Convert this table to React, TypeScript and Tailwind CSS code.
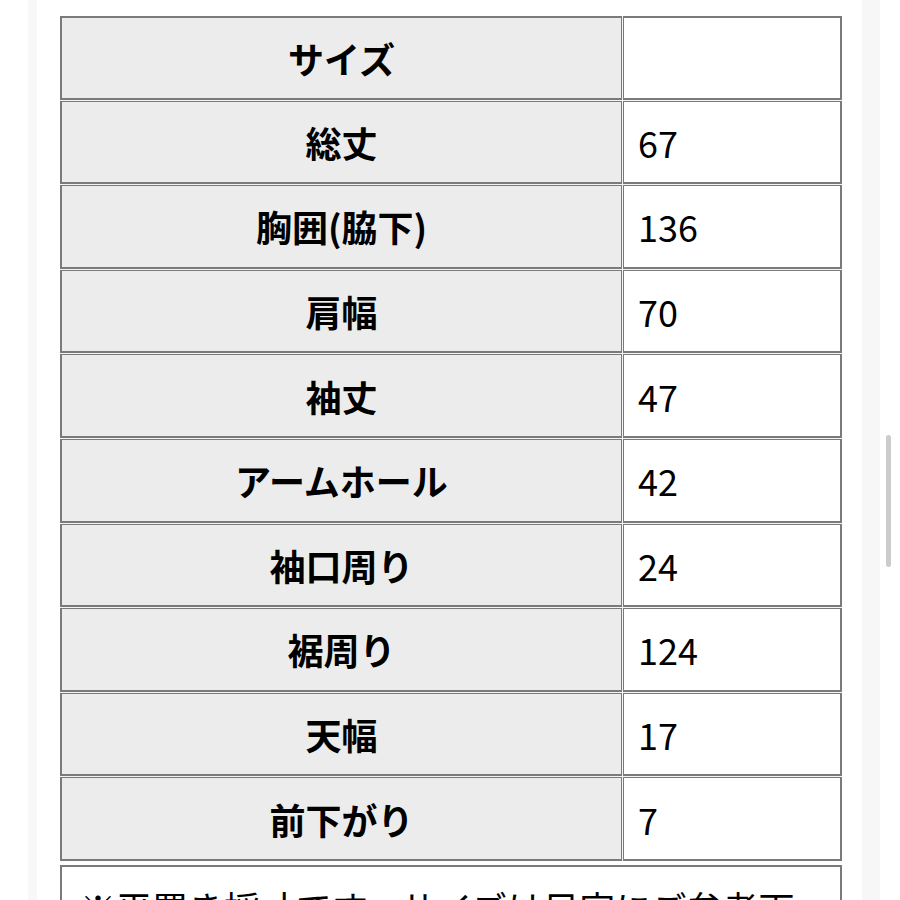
import * as React from "react";

// 採寸表 - サイズ一覧
interface SizeRow {
  label: string;
  value: string;
}

const rows: SizeRow[] = [
  { label: "サイズ", value: "" },
  { label: "総丈", value: "67" },
  { label: "胸囲(脇下)", value: "136" },
  { label: "肩幅", value: "70" },
  { label: "袖丈", value: "47" },
  { label: "アームホール", value: "42" },
  { label: "袖口周り", value: "24" },
  { label: "裾周り", value: "124" },
  { label: "天幅", value: "17" },
  { label: "前下がり", value: "7" },
];

export default function App() {
  return (
    <div
      className="relative h-[900px] w-[900px] overflow-hidden bg-white text-black"
      style={{ fontFamily: '"Noto Sans CJK JP", "Noto Sans", sans-serif' }}
    >
      <div className="flex h-full">
        {/* left edge band */}
        <div className="w-[28px] shrink-0" />
        <div className="w-[9px] shrink-0 bg-[#f8f8f8]" />
        <div className="w-[23px] shrink-0" />

        {/* content */}
        <div className="flex w-[782px] shrink-0 flex-col pt-[16px]">
          <div className="flex flex-col gap-[1px] bg-[#f4f4f4]">
            {rows.map((row, i) => (
              <div key={row.label} className="flex h-[83.6px] gap-[1px]">
                <div
                  className={
                    "flex w-[562px] shrink-0 items-center justify-center border border-b-2 border-l-2 border-[#7a7a7a] bg-[#ececec] text-[36px] font-bold leading-none " +
                    (i === 0 ? "border-t-2" : "")
                  }
                >
                  {row.label}
                </div>
                <div
                  className={
                    "flex flex-1 items-center border border-b-2 border-r-2 border-[#7a7a7a] bg-white pl-[14px] text-[36px] leading-none " +
                    (i === 0 ? "border-t-2" : "")
                  }
                >
                  {row.value}
                </div>
              </div>
            ))}
          </div>

          {/* note */}
          <div className="mt-[4px] border-2 border-[#7a7a7a] bg-white pb-[16px] pl-[18px] pr-[18px] pt-[22px] text-[36px] leading-none">
            ※平置き採寸です。サイズは目安にご参考下さい。
          </div>
        </div>

        {/* right edge band */}
        <div className="w-[20px] shrink-0" />
        <div className="w-[18px] shrink-0 bg-[#f7f7f7]" />
      </div>

      {/* scrollbar */}
      <div className="absolute left-[886px] top-[435px] h-[132px] w-[5px] rounded-full bg-[#cccccc]" />
    </div>
  );
}
